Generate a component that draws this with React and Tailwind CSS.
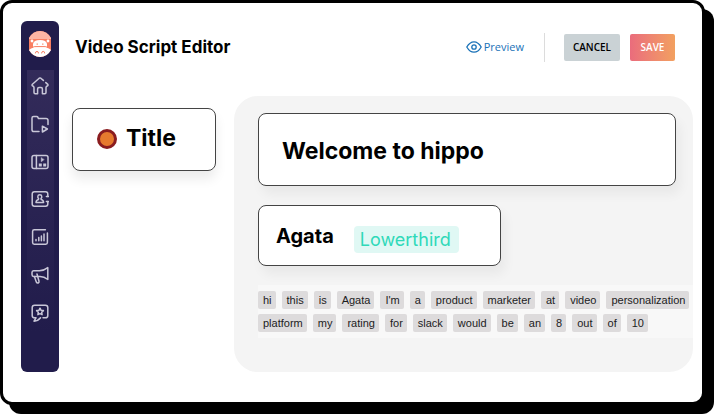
import React from 'react';

const WORDS = [
  'hi', 'this', 'is', 'Agata', "I'm", 'a', 'product', 'marketer', 'at', 'video', 'personalization',
  'platform', 'my', 'rating', 'for', 'slack', 'would', 'be', 'an', '8', 'out', 'of', '10',
];

const NAV = [
  {
    label: 'Home',
    icon: (
      <path d="M12.4 3.4 9.8 1.2Q9 .6 8.2 1.2L1.4 7.2Q.6 8.2 1.4 8.8 3 9.4 3 10.6V15.6Q3 16.8 4.2 16.8H6.6V12Q6.6 10.6 8 10.6H10Q11.4 10.6 11.4 12V16.8H13.8Q15 16.8 15 15.6V10.4Q15 9.4 16.6 8.8 17.4 8.2 16.8 7.4L14.8 5.6" />
    ),
  },
  {
    label: 'Projects',
    icon: (
      <>
        <path d="M8 16.6H2.8Q1 16.6 1 14.8V3Q1 1.4 2.6 1.4H5.6Q6.6 1.4 7 2.4L7.4 3.6H15Q17 3.6 17 5.6V9.4" />
        <path d="M11.4 11.2V17L16.4 14Z" />
      </>
    ),
  },
  {
    label: 'Storyboard',
    icon: (
      <>
        <rect x="1" y="2.6" width="16" height="12.8" rx="2" />
        <path d="M5.4 2.6V15.4" />
        <path d="M10.2 4.8V8.8L13 6.8Z" fill="currentColor" strokeWidth="0.4" />
        <path d="M7.8 12H10.8M12.2 12H15.2" strokeWidth="3" strokeLinecap="butt" />
      </>
    ),
  },
  {
    label: 'Contacts',
    icon: (
      <>
        <path d="M16.8 6.4V4Q16.8 1.8 14.6 1.8H3.4Q1.2 1.8 1.2 4V14Q1.2 16.2 3.4 16.2H14.6Q16.8 16.2 16.8 14V11.6" />
        <path d="M15.4 6.6H17.4M15.4 11.4H17.4" />
        <path d="M7.6 8.6Q6.6 7.6 6.8 6.4 7 4.8 8.8 4.8 10.6 4.8 10.8 6.4 11 7.6 10 8.6L10.2 9.6Q12.4 10 12.6 12.6H5Q5.2 10 7.4 9.6Z" />
      </>
    ),
  },
  {
    label: 'Analytics',
    icon: (
      <>
        <path d="M14.4 1.8H3.2Q1.6 1.8 1.6 3.4V14.6Q1.6 16.2 3.2 16.2H14.8Q16.4 16.2 16.4 14.6V5" />
        <path d="M5 12.8V11.4M7.8 12.8V9.4M10.4 12.8V8M13 12.8V6" />
      </>
    ),
  },
  {
    label: 'Campaigns',
    icon: (
      <>
        <path d="M16.8 1.6V13.4Q13 10.8 9 10.6L6.4 10.6H2.6Q1 10.4 1 8.6V6.6Q1 5 2.6 4.8H8.4Q13 4.6 16.8 1.6Z" />
        <path d="M3.4 10.6 5.4 16.2Q6 17.4 7.2 17 8.4 16.4 8 15.2L6 8" />
      </>
    ),
  },
  {
    label: 'Reviews',
    icon: (
      <>
        <path d="M12 13.8H14.4Q16.8 13.8 16.8 11.4V3.6Q16.8 1.2 14.4 1.2H3.6Q1.2 1.2 1.2 3.6V11.4Q1.2 13.8 3.6 13.8H5L3 17.2Q7 17 9.6 13.8" />
        <path d="M9 4.2 10.1 6.3 12.4 6.6 10.7 8.3 11.1 10.7 9 9.6 6.9 10.7 7.3 8.3 5.6 6.6 7.9 6.3Z" />
      </>
    ),
  },
];

function HippoLogo() {
  return (
    <svg viewBox="0 0 22 26" className="h-[26px] w-[22px]" role="img" aria-label="Hippo">
      <path d="M0 7Q4 0 11 0T22 7V19Q18 26 11 26T0 19Z" fill="#f97f62" />
      <path d="M0 7Q4 0 11 0T22 7V8H0Z" fill="#fdb5a4" />
      <circle cx="3" cy="10" r="1.4" fill="#fff" />
      <circle cx="19" cy="10" r="1.4" fill="#fff" />
      <path d="M4 17V13Q4.6 9 11 9T18 13V17Z" fill="#fff" />
      <path d="M0 19Q1.6 17 5 16.4H17Q20.4 17 22 19 18 26 11 26T0 19Z" fill="#fff" />
      <path d="M3.6 16.4Q5 15.4 7 15.6H15Q17 15.4 18.4 16.4" stroke="#f97f62" fill="none" />
      <path d="M8.2 12.4V13.8M13.8 12.4V13.8" stroke="#f97f62" strokeWidth="1.2" />
      <path d="M6.4 22.4Q6.4 20.4 8 20.4T9.4 22.4M12.6 22.4Q12.6 20.4 14.2 20.4T15.6 22.4" stroke="#f97f62" fill="none" />
    </svg>
  );
}

function Sidebar() {
  return (
    <aside className="flex w-[38px] shrink-0 flex-col items-center rounded-md bg-[#211c4b] pt-[10px]">
      <HippoLogo />
      <nav className="mt-[13px] flex h-[262px] w-[27px] flex-col items-center justify-between bg-linear-to-b from-[#332b5a] to-[#211c4b] pt-[7px] pb-[10px]">
        {NAV.map(({ label, icon }) => (
          <a key={label} href="#" aria-label={label} className="text-[#c9c7d8]">
            <svg
              viewBox="0 0 18 18"
              className="size-[18px]"
              fill="none"
              stroke="currentColor"
              strokeWidth="1.5"
              strokeLinecap="round"
              strokeLinejoin="round"
            >
              {icon}
            </svg>
          </a>
        ))}
      </nav>
    </aside>
  );
}

function Header() {
  return (
    <header className="flex items-center pt-[11px] pr-[18px] pl-[3px]">
      <h1 className="flex-1 text-[17px] leading-[30px] font-bold text-black">Video Script Editor</h1>
      <div className="flex items-center font-['Open_Sans',sans-serif]">
        <button type="button" className="flex items-center gap-[2px] text-[11px] leading-4 text-[#1a72b8]">
          <svg viewBox="0 0 16 12" className="h-3 w-4" fill="none" stroke="currentColor" strokeWidth="1.3">
            <path d="M.8 6Q3.8 .8 8 .8T15.2 6Q12.2 11.2 8 11.2T.8 6Z" />
            <circle cx="8" cy="6" r="2.2" />
          </svg>
          Preview
        </button>
        <span className="ml-5 h-[29px] w-px bg-[#dcdcdc]" />
        <button type="button" className="ml-[19px] h-[27px] w-14 rounded-xs bg-[#cad2d5] text-[10px] font-semibold text-black">
          CANCEL
        </button>
        <button
          type="button"
          className="ml-[10px] h-[27px] w-[45px] rounded-xs bg-linear-to-r from-[#ea6c7c] to-[#f2a05f] text-[10px] font-semibold text-white"
        >
          SAVE
        </button>
      </div>
    </header>
  );
}

function ScriptPanel() {
  return (
    <section className="flex-1 rounded-[24px] bg-[#f4f4f4] pt-[17px] pb-[34px] pl-6">
      <input
        id="title"
        type="text"
        defaultValue="Welcome to hippo"
        className="block h-[73px] w-[calc(100%-17px)] rounded-lg border border-[#444] bg-white px-[23px] pt-[2px] text-[23px] font-bold text-black shadow-[4px_8px_12px_rgba(0,0,0,0.05)]"
      />
      <div className="mt-[19px] flex h-[61px] w-fit items-center rounded-lg border border-[#444] bg-white pr-[41px] pl-[17px] shadow-[4px_8px_12px_rgba(0,0,0,0.05)]">
        <span className="text-[20px] leading-6 font-bold text-black">Agata</span>
        <span className="mt-[7px] ml-5 rounded-sm bg-[#e0f8f4] pr-2 pl-[6px] text-[18px] leading-[27px] text-[#2fd9b9]">
          Lowerthird
        </span>
      </div>
      <div className="mt-[19px] flex flex-wrap gap-x-[6px] gap-y-[5px] bg-[#f8f8f8] py-[6px] font-['Liberation_Sans',Arial,sans-serif]">
        {WORDS.map((word, i) => (
          <span key={i} className="rounded-xs bg-[#dddbdc] pr-1 pl-[5px] text-[11px] leading-[18px] text-[#1c1c1c]">
            {word}
          </span>
        ))}
      </div>
    </section>
  );
}

function App() {
  return (
    <div className="bg-white pr-[9px] pb-[9px] font-['Inter',sans-serif]">
      <div className="flex rounded-xl border-[3px] border-black bg-white pt-[18px] pr-[9px] pb-[30px] pl-[18px] shadow-[9px_9px_0_#000]">
        <Sidebar />
        <main className="flex min-w-0 flex-1 flex-col pl-[13px]">
          <Header />
          <div className="mt-[34px] flex items-start gap-[18px]">
            <label
              htmlFor="title"
              className="mt-3 flex h-[63px] w-36 items-center gap-[9px] rounded-lg border border-[#444] bg-white pb-[2px] pl-6 text-[23px] font-bold text-black shadow-[0_8px_12px_rgba(0,0,0,0.08)]"
            >
              <span className="size-5 rounded-full border-[3px] border-[#8a1c1f] bg-[#e67a2e]" />
              Title
            </label>
            <ScriptPanel />
          </div>
        </main>
      </div>
    </div>
  );
}

export default App;
